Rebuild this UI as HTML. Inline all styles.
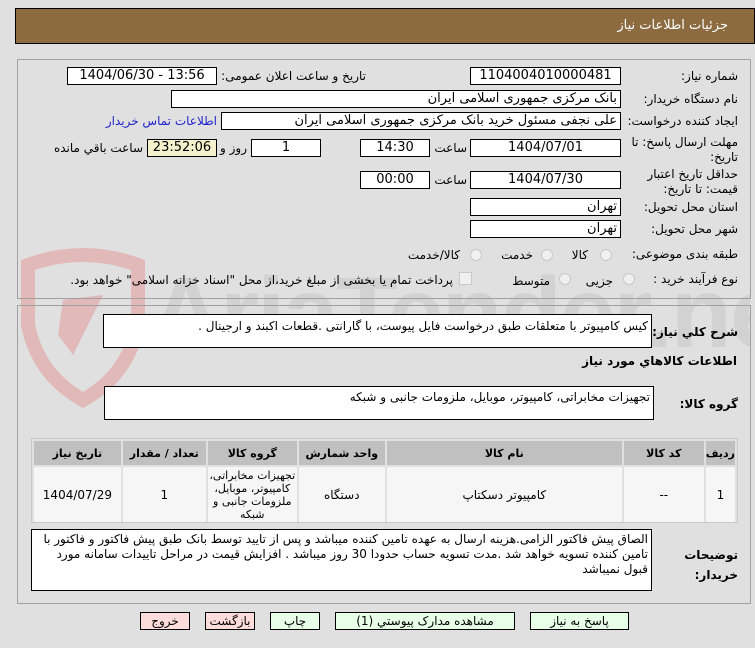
<!DOCTYPE html>
<html><head><meta charset="utf-8"><style>
*{margin:0;padding:0;box-sizing:border-box}
body{width:755px;height:648px;background:#e0e0e0;font-family:"DejaVu Sans","Liberation Sans",sans-serif;font-size:12px;color:#000;position:relative;overflow:hidden}
.a{position:absolute}
.box{position:absolute;background:#fff;border:1px solid #000;height:18px;line-height:16px;text-align:center;font-size:13px}
.rt{text-align:right;padding-right:3px;direction:rtl}
.lbl{position:absolute;direction:rtl;text-align:right;white-space:nowrap}
.panel{position:absolute;border:1px solid #a0a0a0;left:17px;width:734px}
.rad{position:absolute;width:12px;height:12px;border-radius:50%;border:1px solid #c8c8c8;background:#f0f0f0}
table{border-collapse:separate;border-spacing:2px}
td,th{text-align:center;direction:rtl}
.btn{position:absolute;top:612px;height:18px;border:1px solid #000;text-align:center;line-height:16px;font-size:12px;direction:rtl}
</style></head><body>
<div class="a" style="left:15px;top:8px;width:740px;height:36px;background:#8b6b3f;border:1px solid #000"></div>
<div class="lbl" style="right:27px;top:18px;color:#fff;font-size:13px">جزئیات اطلاعات نیاز</div>

<!-- watermark -->
<svg class="a" style="left:18px;top:245px" width="130" height="165" viewBox="0 0 130 165"><path d="M10 20 Q65 0 120 20 L120 80 Q110 130 65 155 Q20 130 10 80Z" fill="none" stroke="#e2b9b9" stroke-width="14"/><path d="M45 55 L85 50 L70 80 L55 110 L40 90Z" fill="#e2b9b9"/></svg>
<div class="a" style="left:150px;top:258px;width:600px;overflow:hidden;font-size:100px;font-weight:bold;color:#d2d2d2;letter-spacing:-2px;font-family:'Liberation Sans',sans-serif;line-height:110px;white-space:nowrap">AriaTender.net</div>

<div class="panel" style="top:59px;height:240px"></div>
<div class="lbl" style="right:17px;top:69px">شماره نیاز:</div>
<div class="box" style="left:470px;top:67px;width:151px">1104004010000481</div>
<div class="lbl" style="right:389px;top:69px">تاریخ و ساعت اعلان عمومی:</div>
<div class="box" style="left:67px;top:67px;width:150px">1404/06/30 - 13:56</div>

<div class="lbl" style="right:17px;top:92px">نام دستگاه خریدار:</div>
<div class="box rt" style="left:171px;top:90px;width:450px">بانک مرکزی جمهوری اسلامی ایران</div>

<div class="lbl" style="right:17px;top:114px">ایجاد کننده درخواست:</div>
<div class="box rt" style="left:221px;top:112px;width:400px">علی  نجفی مسئول خرید بانک مرکزی جمهوری اسلامی ایران</div>
<div class="lbl" style="right:538px;top:114px;color:#2222cc">اطلاعات تماس خریدار</div>

<div class="lbl" style="right:17px;top:135px;line-height:15px">مهلت ارسال پاسخ: تا<br>تاریخ:</div>
<div class="box" style="left:470px;top:139px;width:151px">1404/07/01</div>
<div class="lbl" style="right:288px;top:141px">ساعت</div>
<div class="box" style="left:360px;top:139px;width:70px">14:30</div>
<div class="box" style="left:251px;top:139px;width:70px">1</div>
<div class="lbl" style="right:508px;top:141px">روز و</div>
<div class="box" style="left:147px;top:139px;width:70px;background:#f5f1cc">23:52:06</div>
<div class="lbl" style="right:612px;top:141px">ساعت باقي مانده</div>

<div class="lbl" style="right:17px;top:167px;line-height:15px">حداقل تاریخ اعتبار<br>قیمت: تا تاریخ:</div>
<div class="box" style="left:470px;top:171px;width:151px">1404/07/30</div>
<div class="lbl" style="right:288px;top:173px">ساعت</div>
<div class="box" style="left:360px;top:171px;width:70px">00:00</div>

<div class="lbl" style="right:17px;top:200px">استان محل تحویل:</div>
<div class="box rt" style="left:470px;top:198px;width:151px">تهران</div>
<div class="lbl" style="right:17px;top:222px">شهر محل تحویل:</div>
<div class="box rt" style="left:470px;top:220px;width:151px">تهران</div>

<div class="lbl" style="right:17px;top:247px">طبقه بندی موضوعی:</div>
<div class="rad" style="left:600px;top:249px"></div><div class="lbl" style="right:167px;top:248px">کالا</div>
<div class="rad" style="left:541px;top:249px"></div><div class="lbl" style="right:222px;top:248px">خدمت</div>
<div class="rad" style="left:470px;top:249px"></div><div class="lbl" style="right:295px;top:248px">کالا/خدمت</div>

<div class="lbl" style="right:17px;top:272px">نوع فرآیند خرید :</div>
<div class="rad" style="left:623px;top:273px"></div><div class="lbl" style="right:142px;top:274px">جزیی</div>
<div class="rad" style="left:559px;top:273px"></div><div class="lbl" style="right:205px;top:274px">متوسط</div>
<div class="a" style="left:459px;top:272px;width:13px;height:13px;border:1px solid #c8c8c8;background:#f0f0f0"></div>
<div class="lbl" style="right:302px;top:273px">پرداخت تمام یا بخشی از مبلغ خرید،از محل "اسناد خزانه اسلامی" خواهد بود.</div>

<div class="panel" style="top:305px;height:299px"></div>
<div class="lbl" style="right:17px;top:325px;font-weight:bold">شرح کلي نياز:</div>
<div class="a rt" style="left:103px;top:314px;width:549px;height:34px;background:#fff;border:1px solid #000;padding-top:4px;font-size:12px">کیس کامپیوتر با متعلقات طبق درخواست فایل پیوست، با گارانتی .قطعات اکبند و ارجینال .</div>
<div class="lbl" style="right:18px;top:354px;font-weight:bold">اطلاعات کالاهاي مورد نياز</div>
<div class="lbl" style="right:17px;top:397px;font-weight:bold">گروه کالا:</div>
<div class="a rt" style="left:104px;top:386px;width:550px;height:34px;background:#fff;border:1px solid #000;padding-top:3px">تجهیزات مخابراتی، کامپیوتر، موبایل، ملزومات جانبی و شبکه</div>

<div class="a" style="left:31px;top:438px;width:707px;height:85px;border:1px solid #c8c8c8;background:#e0e0e0">
<table style="width:705px;direction:rtl;font-size:11px">
<tr style="background:#c0c0c0;height:24px;font-weight:bold"><th style="width:29px">ردیف</th><th style="width:80px">کد کالا</th><th style="width:235px">نام کالا</th><th style="width:86px">واحد شمارش</th><th style="width:89px">گروه کالا</th><th style="width:83px">تعداد / مقدار</th><th>تاریخ نیاز</th></tr>
<tr style="background:#f6f6f6;height:55px;font-size:12px"><td>1</td><td>--</td><td>کامپیوتر دسکتاپ</td><td>دستگاه</td><td style="font-size:11px;line-height:13px">تجهیزات مخابراتی، کامپیوتر، موبایل، ملزومات جانبی و شبکه</td><td>1</td><td>1404/07/29</td></tr>
</table></div>

<div class="lbl" style="right:17px;top:545px;font-weight:bold;line-height:20px">توضیحات<br>خریدار:</div>
<div class="a rt" style="left:31px;top:529px;width:621px;height:62px;background:#fff;border:1px solid #000;padding-top:2px;line-height:15px;font-size:12px">الصاق پیش فاکتور الزامی.هزینه ارسال به عهده تامین کننده میباشد و پس از تایید توسط بانک طبق پیش فاکتور و فاکتور با تامین کننده تسویه خواهد شد .مدت تسویه حساب حدودا 30 روز میباشد . افزایش قیمت در مراحل تاییدات سامانه مورد قبول نمیباشد</div>

<div class="btn" style="left:140px;width:50px;background:#ffdcdc">خروج</div>
<div class="btn" style="left:205px;width:50px;background:#ffdcdc">بازگشت</div>
<div class="btn" style="left:270px;width:50px;background:#e8ffe8">چاپ</div>
<div class="btn" style="left:335px;width:180px;background:#e8ffe8">مشاهده مدارک پیوستي (1)</div>
<div class="btn" style="left:530px;width:99px;background:#e8ffe8">پاسخ به نیاز</div>
</body></html>
